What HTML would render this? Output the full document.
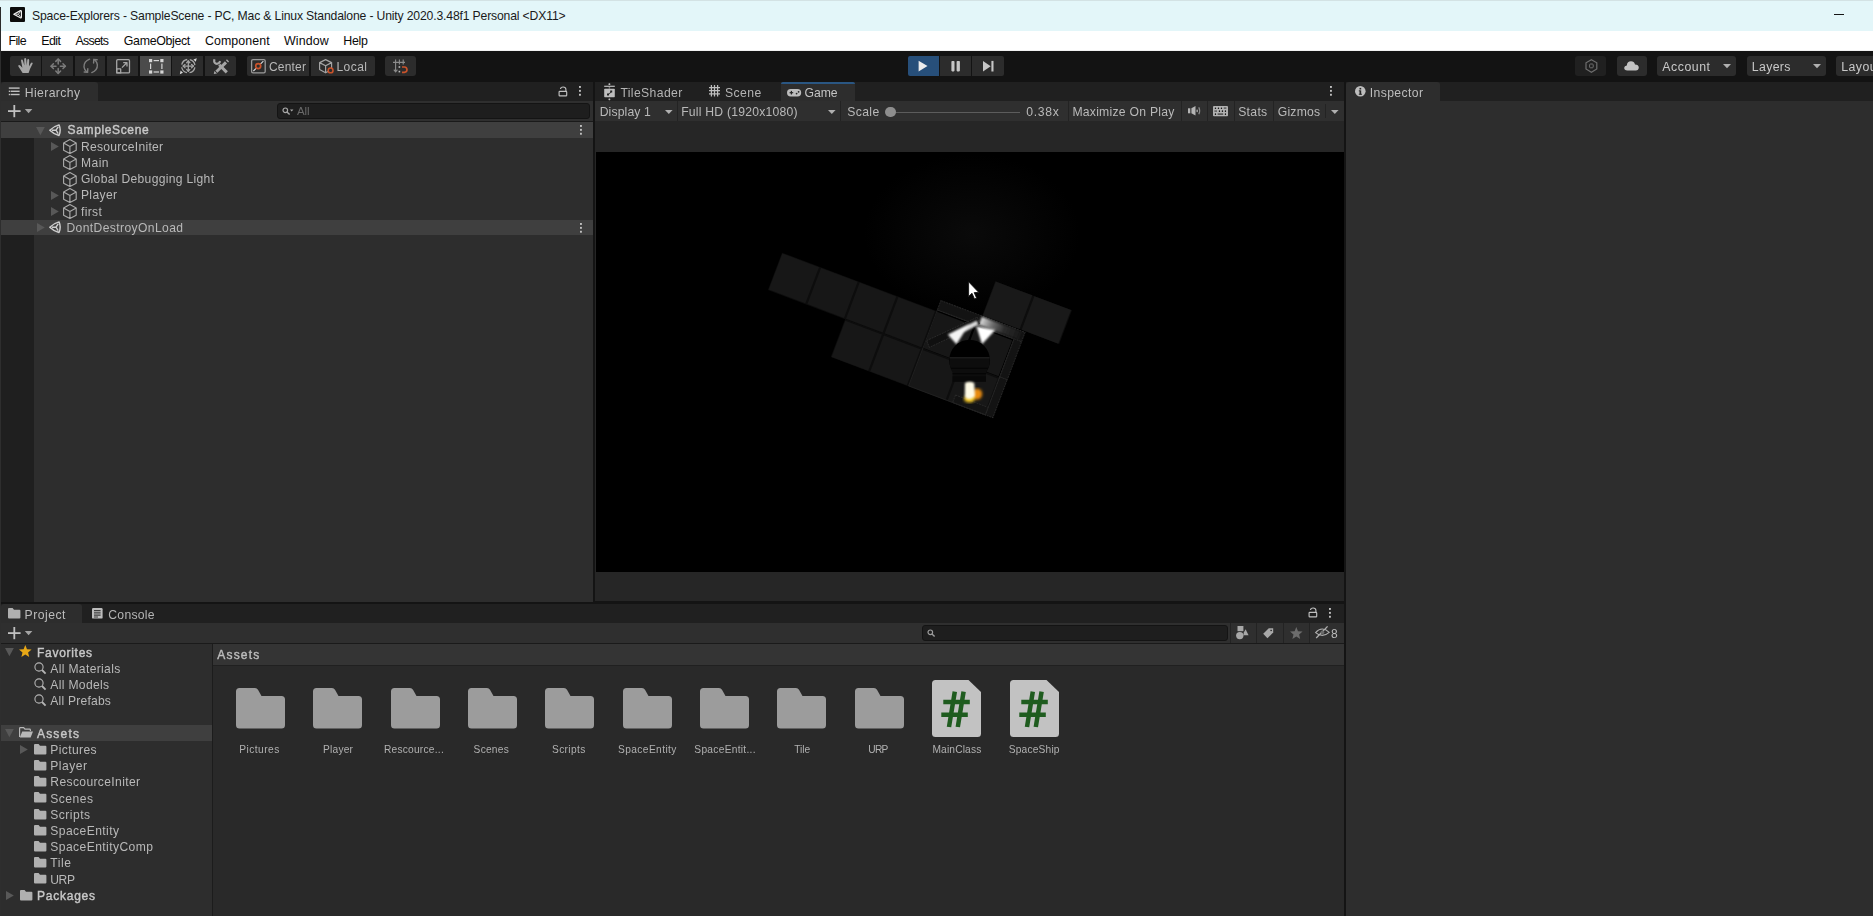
<!DOCTYPE html>
<html><head><meta charset="utf-8">
<style>
*{box-sizing:border-box;margin:0;padding:0}
html,body{width:1873px;height:916px;overflow:hidden;background:#141414}
body{font-family:"Liberation Sans",sans-serif;font-size:12px;color:#c4c4c4;position:relative}
.a{position:absolute}
.t{position:absolute;white-space:pre;line-height:16px;height:16px}
svg{position:absolute;overflow:visible}
</style></head><body>
<div class="a" style="left:0.0px;top:0.0px;width:1873.0px;height:30.8px;background:#e3f6f9;"></div>
<div class="a" style="left:0.0px;top:0.0px;width:1873.0px;height:1.0px;background:#d3e2e4;"></div>
<div class="a" style="left:0.0px;top:30.8px;width:1873.0px;height:20.2px;background:#ffffff;"></div>
<div class="a" style="left:0.0px;top:49.6px;width:1873.0px;height:1.2px;background:#f1f1f1;"></div>
<div class="a" style="left:0.0px;top:7.0px;width:1.1px;height:44.0px;background:#2a2a2a;"></div>
<div class="a" style="left:10.0px;top:7.0px;width:14.5px;height:14.5px;background:#0c0c0c;border-radius:1px"></div>
<svg style="left:10.0px;top:7.0px;" width="14.5" height="14.5" viewBox="0 0 14.5 14.5"><path d="M3.8 7.2 L10.4 3.6 Q11.4 3.4 11.4 4.4 L11.4 10 Q11.4 11 10.4 10.8 Z" fill="none" stroke="#f0f0f0" stroke-width="1.2" stroke-linejoin="round"/><path d="M5.6 7.2 L8.4 7.2 L10.4 4.6 M8.4 7.2 L10.4 9.8" stroke="#f0f0f0" stroke-width="0.9" fill="none"/></svg>
<div class="t" style="left:32.0px;top:7.5px;font-size:12.2px;font-weight:400;color:#1a1a1a;letter-spacing:-0.16px;">Space-Explorers - SampleScene - PC, Mac &amp; Linux Standalone - Unity 2020.3.48f1 Personal &lt;DX11&gt;</div>
<div class="a" style="left:1834.0px;top:14.0px;width:10.2px;height:1.3px;background:#151515;"></div>
<div class="t" style="left:8.5px;top:32.7px;font-size:12.4px;font-weight:400;color:#0a0a0a;letter-spacing:-0.62px;">File</div>
<div class="t" style="left:41.2px;top:32.7px;font-size:12.4px;font-weight:400;color:#0a0a0a;letter-spacing:-0.52px;">Edit</div>
<div class="t" style="left:75.4px;top:32.7px;font-size:12.4px;font-weight:400;color:#0a0a0a;letter-spacing:-0.72px;">Assets</div>
<div class="t" style="left:123.8px;top:32.7px;font-size:12.4px;font-weight:400;color:#0a0a0a;letter-spacing:-0.34px;">GameObject</div>
<div class="t" style="left:204.9px;top:32.7px;font-size:12.4px;font-weight:400;color:#0a0a0a;letter-spacing:0.10px;">Component</div>
<div class="t" style="left:284.0px;top:32.7px;font-size:12.4px;font-weight:400;color:#0a0a0a;letter-spacing:0.12px;">Window</div>
<div class="t" style="left:343.3px;top:32.7px;font-size:12.4px;font-weight:400;color:#0a0a0a;letter-spacing:-0.33px;">Help</div>
<div class="a" style="left:0.0px;top:51.0px;width:1873.0px;height:31.0px;background:#131313;"></div>
<div class="a" style="left:10.4px;top:56.0px;width:30.8px;height:20.3px;background:#2c2c2c;border-radius:2px 0 0 2px"></div>
<div class="a" style="left:42.0px;top:56.0px;width:30.8px;height:20.3px;background:#2c2c2c;border-radius:0"></div>
<div class="a" style="left:74.7px;top:56.0px;width:30.8px;height:20.3px;background:#2c2c2c;border-radius:0"></div>
<div class="a" style="left:107.2px;top:56.0px;width:30.8px;height:20.3px;background:#2c2c2c;border-radius:0"></div>
<div class="a" style="left:139.8px;top:56.0px;width:30.8px;height:20.3px;background:#4b4b4b;border-radius:0"></div>
<div class="a" style="left:172.1px;top:56.0px;width:30.8px;height:20.3px;background:#2c2c2c;border-radius:0"></div>
<div class="a" style="left:205.1px;top:56.0px;width:30.8px;height:20.3px;background:#2c2c2c;border-radius:0 2px 2px 0"></div>
<div class="a" style="left:246.5px;top:56.0px;width:62.6px;height:20.3px;background:#2c2c2c;border-radius:2px 0 0 2px"></div>
<div class="a" style="left:310.8px;top:56.0px;width:64.0px;height:20.3px;background:#2c2c2c;border-radius:0 2px 2px 0"></div>
<div class="a" style="left:384.5px;top:56.0px;width:31.2px;height:20.3px;background:#2c2c2c;border-radius:3px"></div>
<div class="a" style="left:908.2px;top:56.0px;width:30.5px;height:20.3px;background:#274f7a;border-radius:2px 0 0 2px"></div>
<div class="a" style="left:939.9px;top:56.0px;width:31.0px;height:20.3px;background:#2c2c2c;"></div>
<div class="a" style="left:972.0px;top:56.0px;width:31.5px;height:20.3px;background:#2c2c2c;border-radius:0 2px 2px 0"></div>
<svg style="left:908.0px;top:56.0px;" width="31" height="20" viewBox="0 0 31 20"><path d="M10.6 4.8 L19.5 10.1 L10.6 15.5 Z" fill="#ececec"/></svg>
<svg style="left:940.0px;top:56.0px;" width="31" height="20" viewBox="0 0 31 20"><rect x="11.4" y="5" width="3.1" height="10.4" rx="0.8" fill="#c6c6c6"/><rect x="16.6" y="5" width="3.3" height="10.4" rx="0.8" fill="#c6c6c6"/></svg>
<svg style="left:972.0px;top:56.0px;" width="31" height="20" viewBox="0 0 31 20"><path d="M11 4.9 L18.7 10.2 L11 15.5 Z" fill="#c6c6c6"/><rect x="19.4" y="4.9" width="2.1" height="10.6" fill="#c6c6c6"/></svg>
<div class="a" style="left:1575.4px;top:56.0px;width:31.0px;height:20.3px;background:#202020;border-radius:3px"></div>
<div class="a" style="left:1616.5px;top:56.0px;width:30.5px;height:20.3px;background:#2c2c2c;border-radius:3px"></div>
<div class="a" style="left:1656.9px;top:56.0px;width:79.4px;height:20.3px;background:#2c2c2c;border-radius:3px"></div>
<div class="a" style="left:1746.7px;top:56.0px;width:79.0px;height:20.3px;background:#2c2c2c;border-radius:3px"></div>
<div class="a" style="left:1836.2px;top:56.0px;width:50.0px;height:20.3px;background:#2c2c2c;border-radius:3px"></div>
<svg style="left:1723.4px;top:64.3px;" width="8" height="5" viewBox="0 0 8 5"><path d="M0 0 L8 0 L4 4.2 Z" fill="#b0b0b0"/></svg>
<svg style="left:1812.6px;top:64.3px;" width="8" height="5" viewBox="0 0 8 5"><path d="M0 0 L8 0 L4 4.2 Z" fill="#b0b0b0"/></svg>
<div class="a" style="left:1.0px;top:82.0px;width:592.2px;height:19.0px;background:#202020;"></div>
<div class="a" style="left:1.0px;top:82.0px;width:97.0px;height:19.0px;background:#2d2d2d;border-radius:3px 3px 0 0"></div>
<div class="a" style="left:1.0px;top:101.0px;width:592.2px;height:20.5px;background:#2f2f2f;"></div>
<div class="a" style="left:1.0px;top:121.0px;width:592.2px;height:1.0px;background:#1a1a1a;"></div>
<div class="a" style="left:1.0px;top:122.0px;width:592.2px;height:479.5px;background:#2d2d2d;"></div>
<div class="a" style="left:1.0px;top:137.5px;width:32.6px;height:464.0px;background:#1f1f1f;"></div>
<div class="a" style="left:1.0px;top:122.0px;width:592.2px;height:15.5px;background:#3f3f3f;"></div>
<div class="a" style="left:1.0px;top:220.2px;width:592.2px;height:14.8px;background:#3f3f3f;"></div>
<div class="a" style="left:277.0px;top:103.0px;width:312.6px;height:16.0px;background:#1e1e1e;border-radius:3px;border:1px solid #141414"></div>
<div class="a" style="left:595.0px;top:82.0px;width:748.8px;height:19.0px;background:#202020;"></div>
<div class="a" style="left:780.7px;top:81.6px;width:74.4px;height:19.4px;background:#2d2d2d;border-radius:3px 3px 0 0"></div>
<div class="a" style="left:780.7px;top:81.6px;width:74.4px;height:2.2px;background:#2a5682;border-radius:3px 3px 0 0"></div>
<div class="a" style="left:595.0px;top:101.0px;width:748.8px;height:20.3px;background:#2f2f2f;"></div>
<div class="a" style="left:595.0px;top:121.3px;width:748.8px;height:480.0px;background:#262626;"></div>
<div class="a" style="left:596.0px;top:151.6px;width:747.8px;height:420.2px;background:#000;"></div>
<div class="a" style="left:676.7px;top:101.0px;width:1.0px;height:20.3px;background:#232323;"></div>
<div class="a" style="left:839.5px;top:101.0px;width:1.0px;height:20.3px;background:#232323;"></div>
<div class="a" style="left:1067.5px;top:101.0px;width:1.0px;height:20.3px;background:#232323;"></div>
<div class="a" style="left:1180.5px;top:101.0px;width:1.0px;height:20.3px;background:#232323;"></div>
<div class="a" style="left:1206.8px;top:101.0px;width:1.0px;height:20.3px;background:#232323;"></div>
<div class="a" style="left:1233.5px;top:101.0px;width:1.0px;height:20.3px;background:#232323;"></div>
<div class="a" style="left:1273.2px;top:101.0px;width:1.0px;height:20.3px;background:#232323;"></div>
<div class="a" style="left:1325.2px;top:104.0px;width:1.0px;height:14.0px;background:#232323;"></div>
<svg style="left:665.0px;top:109.6px;" width="8" height="5" viewBox="0 0 8 5"><path d="M0 0 L7.6 0 L3.8 4 Z" fill="#b0b0b0"/></svg>
<svg style="left:827.5px;top:109.6px;" width="8" height="5" viewBox="0 0 8 5"><path d="M0 0 L7.6 0 L3.8 4 Z" fill="#b0b0b0"/></svg>
<svg style="left:1330.6px;top:109.6px;" width="8" height="5" viewBox="0 0 8 5"><path d="M0 0 L7.6 0 L3.8 4 Z" fill="#b0b0b0"/></svg>
<div class="a" style="left:891.0px;top:111.6px;width:129.0px;height:1.2px;background:#5c5c5c;"></div>
<div class="a" style="left:885.4px;top:106.7px;width:10.6px;height:10.6px;background:#8e8e8e;border-radius:50%"></div>
<div class="a" style="left:1346.3px;top:82.0px;width:527.0px;height:19.0px;background:#202020;"></div>
<div class="a" style="left:1346.3px;top:82.0px;width:93.4px;height:19.0px;background:#2d2d2d;border-radius:3px 3px 0 0"></div>
<div class="a" style="left:1346.3px;top:101.0px;width:527.0px;height:815.0px;background:#2d2d2d;"></div>
<div class="a" style="left:1.0px;top:603.5px;width:1343.0px;height:19.2px;background:#202020;"></div>
<div class="a" style="left:1.0px;top:603.5px;width:81.0px;height:19.2px;background:#2d2d2d;border-radius:3px 3px 0 0"></div>
<div class="a" style="left:1.0px;top:622.7px;width:1343.0px;height:20.3px;background:#2f2f2f;"></div>
<div class="a" style="left:1.0px;top:643.0px;width:1343.0px;height:1.0px;background:#1a1a1a;"></div>
<div class="a" style="left:1.0px;top:644.0px;width:211.0px;height:272.0px;background:#2d2d2d;"></div>
<div class="a" style="left:212.0px;top:644.0px;width:1.4px;height:272.0px;background:#1c1c1c;"></div>
<div class="a" style="left:213.4px;top:644.0px;width:1130.6px;height:20.6px;background:#343434;"></div>
<div class="a" style="left:213.4px;top:664.6px;width:1130.6px;height:1.0px;background:#202020;"></div>
<div class="a" style="left:213.4px;top:665.6px;width:1130.6px;height:251.0px;background:#292929;"></div>
<div class="a" style="left:1.0px;top:724.9px;width:211.0px;height:15.8px;background:#3f3f3f;"></div>
<div class="a" style="left:922.0px;top:624.5px;width:306.0px;height:16.5px;background:#1e1e1e;border-radius:3px;border:1px solid #141414"></div>
<div class="a" style="left:1230.1px;top:622.7px;width:1.0px;height:20.3px;background:#232323;"></div>
<div class="a" style="left:1256.0px;top:622.7px;width:1.0px;height:20.3px;background:#232323;"></div>
<div class="a" style="left:1282.5px;top:622.7px;width:1.0px;height:20.3px;background:#232323;"></div>
<div class="a" style="left:1309.0px;top:622.7px;width:1.0px;height:20.3px;background:#232323;"></div>
<svg style="left:236.0px;top:688.0px;" width="49" height="41" viewBox="0 0 49 41"><path d="M0 3.5 Q0 0 3.5 0 L19 0 Q21 0 22 1.8 L25.5 8 L45.5 8 Q49 8 49 11.5 L49 37 Q49 40.5 45.5 40.5 L3.5 40.5 Q0 40.5 0 37 Z" fill="#9c9c9c"/></svg>
<svg style="left:313.4px;top:688.0px;" width="49" height="41" viewBox="0 0 49 41"><path d="M0 3.5 Q0 0 3.5 0 L19 0 Q21 0 22 1.8 L25.5 8 L45.5 8 Q49 8 49 11.5 L49 37 Q49 40.5 45.5 40.5 L3.5 40.5 Q0 40.5 0 37 Z" fill="#9c9c9c"/></svg>
<svg style="left:390.7px;top:688.0px;" width="49" height="41" viewBox="0 0 49 41"><path d="M0 3.5 Q0 0 3.5 0 L19 0 Q21 0 22 1.8 L25.5 8 L45.5 8 Q49 8 49 11.5 L49 37 Q49 40.5 45.5 40.5 L3.5 40.5 Q0 40.5 0 37 Z" fill="#9c9c9c"/></svg>
<svg style="left:468.0px;top:688.0px;" width="49" height="41" viewBox="0 0 49 41"><path d="M0 3.5 Q0 0 3.5 0 L19 0 Q21 0 22 1.8 L25.5 8 L45.5 8 Q49 8 49 11.5 L49 37 Q49 40.5 45.5 40.5 L3.5 40.5 Q0 40.5 0 37 Z" fill="#9c9c9c"/></svg>
<svg style="left:545.4px;top:688.0px;" width="49" height="41" viewBox="0 0 49 41"><path d="M0 3.5 Q0 0 3.5 0 L19 0 Q21 0 22 1.8 L25.5 8 L45.5 8 Q49 8 49 11.5 L49 37 Q49 40.5 45.5 40.5 L3.5 40.5 Q0 40.5 0 37 Z" fill="#9c9c9c"/></svg>
<svg style="left:622.8px;top:688.0px;" width="49" height="41" viewBox="0 0 49 41"><path d="M0 3.5 Q0 0 3.5 0 L19 0 Q21 0 22 1.8 L25.5 8 L45.5 8 Q49 8 49 11.5 L49 37 Q49 40.5 45.5 40.5 L3.5 40.5 Q0 40.5 0 37 Z" fill="#9c9c9c"/></svg>
<svg style="left:700.1px;top:688.0px;" width="49" height="41" viewBox="0 0 49 41"><path d="M0 3.5 Q0 0 3.5 0 L19 0 Q21 0 22 1.8 L25.5 8 L45.5 8 Q49 8 49 11.5 L49 37 Q49 40.5 45.5 40.5 L3.5 40.5 Q0 40.5 0 37 Z" fill="#9c9c9c"/></svg>
<svg style="left:777.4px;top:688.0px;" width="49" height="41" viewBox="0 0 49 41"><path d="M0 3.5 Q0 0 3.5 0 L19 0 Q21 0 22 1.8 L25.5 8 L45.5 8 Q49 8 49 11.5 L49 37 Q49 40.5 45.5 40.5 L3.5 40.5 Q0 40.5 0 37 Z" fill="#9c9c9c"/></svg>
<svg style="left:854.8px;top:688.0px;" width="49" height="41" viewBox="0 0 49 41"><path d="M0 3.5 Q0 0 3.5 0 L19 0 Q21 0 22 1.8 L25.5 8 L45.5 8 Q49 8 49 11.5 L49 37 Q49 40.5 45.5 40.5 L3.5 40.5 Q0 40.5 0 37 Z" fill="#9c9c9c"/></svg>
<svg style="left:932.3px;top:680.0px;" width="49" height="57" viewBox="0 0 49 57"><path d="M3.5 0 L36.5 0 L49 12 L49 53.5 Q49 57 45.5 57 L3.5 57 Q0 57 0 53.5 L0 3.5 Q0 0 3.5 0 Z" fill="#c2c2c2"/><g stroke="#1f5c1f" stroke-width="4.5" fill="none"><path d="M22.8 11.6 L17 47 M31.6 11.6 L25.8 47 M11.3 22 L37.8 22 M9.3 34.7 L35.8 34.7"/></g></svg>
<svg style="left:1009.5px;top:680.0px;" width="49" height="57" viewBox="0 0 49 57"><path d="M3.5 0 L36.5 0 L49 12 L49 53.5 Q49 57 45.5 57 L3.5 57 Q0 57 0 53.5 L0 3.5 Q0 0 3.5 0 Z" fill="#c2c2c2"/><g stroke="#1f5c1f" stroke-width="4.5" fill="none"><path d="M22.8 11.6 L17 47 M31.6 11.6 L25.8 47 M11.3 22 L37.8 22 M9.3 34.7 L35.8 34.7"/></g></svg>
<div class="a" style="left:0.0px;top:51.0px;width:1.0px;height:865.0px;background:#2e2e2e;"></div>
<svg style="left:8.0px;top:86.0px;" width="13" height="11" viewBox="0 0 13 11"><g fill="#c0c0c0"><rect x="0.8" y="1.4" width="10.8" height="1.4"/><rect x="2.6" y="4.6" width="9" height="1.4"/><rect x="2.6" y="7.8" width="9" height="1.4"/><rect x="0.8" y="4.6" width="1.2" height="1.4"/><rect x="0.8" y="7.8" width="1.2" height="1.4"/></g></svg>
<svg style="left:8.0px;top:105.0px;" width="26" height="14" viewBox="0 0 26 14"><g fill="#c0c0c0"><rect x="0" y="5.2" width="12.6" height="1.8"/><rect x="5.4" y="0" width="1.8" height="12.2"/></g><path d="M16.8 4 L24.4 4 L20.6 8.2 Z" fill="#a4a4a4"/></svg>
<svg style="left:8.0px;top:626.8px;" width="26" height="14" viewBox="0 0 26 14"><g fill="#c0c0c0"><rect x="0" y="5.2" width="12.6" height="1.8"/><rect x="5.4" y="0" width="1.8" height="12.2"/></g><path d="M16.8 4 L24.4 4 L20.6 8.2 Z" fill="#a4a4a4"/></svg>
<svg style="left:558.0px;top:86.0px;" width="10" height="11" viewBox="0 0 10 11"><rect x="1.1" y="5.3" width="7.6" height="4.6" rx="0.7" fill="none" stroke="#c0c0c0" stroke-width="1.15"/><path d="M7.9 5.2 L7.9 3.2 Q7.7 1 5.2 1 Q2.6 1 2.5 3" fill="none" stroke="#c0c0c0" stroke-width="1.15"/></svg>
<svg style="left:579.2px;top:86.3px;" width="3" height="12" viewBox="0 0 3 12"><g fill="#c0c0c0"><rect x="0" y="0" width="1.9" height="1.9"/><rect x="0" y="3.9" width="1.9" height="1.9"/><rect x="0" y="7.8" width="1.9" height="1.9"/></g></svg>
<svg style="left:580.3px;top:125.0px;" width="3" height="12" viewBox="0 0 3 12"><g fill="#c0c0c0"><rect x="0" y="0" width="1.9" height="1.9"/><rect x="0" y="3.9" width="1.9" height="1.9"/><rect x="0" y="7.8" width="1.9" height="1.9"/></g></svg>
<svg style="left:580.3px;top:223.2px;" width="3" height="12" viewBox="0 0 3 12"><g fill="#c0c0c0"><rect x="0" y="0" width="1.9" height="1.9"/><rect x="0" y="3.9" width="1.9" height="1.9"/><rect x="0" y="7.8" width="1.9" height="1.9"/></g></svg>
<svg style="left:1329.6px;top:86.3px;" width="3" height="12" viewBox="0 0 3 12"><g fill="#c0c0c0"><rect x="0" y="0" width="1.9" height="1.9"/><rect x="0" y="3.9" width="1.9" height="1.9"/><rect x="0" y="7.8" width="1.9" height="1.9"/></g></svg>
<svg style="left:1308.4px;top:607.4px;" width="10" height="11" viewBox="0 0 10 11"><rect x="1.1" y="5.3" width="7.6" height="4.6" rx="0.7" fill="none" stroke="#c0c0c0" stroke-width="1.15"/><path d="M7.9 5.2 L7.9 3.2 Q7.7 1 5.2 1 Q2.6 1 2.5 3" fill="none" stroke="#c0c0c0" stroke-width="1.15"/></svg>
<svg style="left:1329.4px;top:608.0px;" width="3" height="12" viewBox="0 0 3 12"><g fill="#c0c0c0"><rect x="0" y="0" width="1.9" height="1.9"/><rect x="0" y="3.9" width="1.9" height="1.9"/><rect x="0" y="7.8" width="1.9" height="1.9"/></g></svg>
<svg style="left:282.2px;top:106.6px;" width="12" height="9" viewBox="0 0 12 9"><circle cx="3.3" cy="3.3" r="2.3" fill="none" stroke="#a8a8a8" stroke-width="1.2"/><path d="M5 5 L7.6 7.6" stroke="#a8a8a8" stroke-width="1.4"/><path d="M8 2.6 L11.4 2.6 L9.7 4.6 Z" fill="#a8a8a8"/></svg>
<svg style="left:927.2px;top:629.4px;" width="12" height="9" viewBox="0 0 12 9"><circle cx="3.3" cy="3.3" r="2.3" fill="none" stroke="#9c9c9c" stroke-width="1.2"/><path d="M5 5 L7.6 7.6" stroke="#9c9c9c" stroke-width="1.4"/></svg>
<svg style="left:35.8px;top:127.0px;" width="9" height="9" viewBox="0 0 9 9"><path d="M0 0 L8.8 0 L4.4 8.2 Z" fill="#585858"/></svg>
<svg style="left:49.0px;top:123.6px;" width="12" height="12.4" viewBox="0 0 12 12.4"><path d="M0.8 6.2 Q4.6 2.4 10 0.9 Q12.4 6.2 10 11.5 Q4.6 10 0.8 6.2 Z" fill="none" stroke="#cdcdcd" stroke-width="1.5" stroke-linejoin="round"/><path d="M3 6.2 L7 6.2 M7 6.2 L9.2 2.8 M7 6.2 L9.2 9.6" stroke="#cdcdcd" stroke-width="1.4" fill="none"/></svg>
<svg style="left:36.6px;top:223.4px;" width="9" height="10" viewBox="0 0 9 10"><path d="M0 0 L7.8 4.5 L0 9 Z" fill="#585858"/></svg>
<svg style="left:49.0px;top:221.4px;" width="12" height="12.4" viewBox="0 0 12 12.4"><path d="M0.8 6.2 Q4.6 2.4 10 0.9 Q12.4 6.2 10 11.5 Q4.6 10 0.8 6.2 Z" fill="none" stroke="#cdcdcd" stroke-width="1.5" stroke-linejoin="round"/><path d="M3 6.2 L7 6.2 M7 6.2 L9.2 2.8 M7 6.2 L9.2 9.6" stroke="#cdcdcd" stroke-width="1.4" fill="none"/></svg>
<svg style="left:62.8px;top:139.1px;" width="14" height="15" viewBox="0 0 14 15"><path d="M6.9 0.6 L13.2 3.9 L13.2 11.2 L6.9 14.6 L0.6 11.2 L0.6 3.9 Z M0.6 3.9 L6.9 7.4 L13.2 3.9 M6.9 7.4 L6.9 14.6" fill="none" stroke="#a9a9a9" stroke-width="1.15" stroke-linejoin="round"/></svg>
<svg style="left:51.0px;top:142.2px;" width="9" height="10" viewBox="0 0 9 10"><path d="M0 0 L7.8 4.5 L0 9 Z" fill="#585858"/></svg>
<svg style="left:62.8px;top:155.3px;" width="14" height="15" viewBox="0 0 14 15"><path d="M6.9 0.6 L13.2 3.9 L13.2 11.2 L6.9 14.6 L0.6 11.2 L0.6 3.9 Z M0.6 3.9 L6.9 7.4 L13.2 3.9 M6.9 7.4 L6.9 14.6" fill="none" stroke="#a9a9a9" stroke-width="1.15" stroke-linejoin="round"/></svg>
<svg style="left:62.8px;top:171.5px;" width="14" height="15" viewBox="0 0 14 15"><path d="M6.9 0.6 L13.2 3.9 L13.2 11.2 L6.9 14.6 L0.6 11.2 L0.6 3.9 Z M0.6 3.9 L6.9 7.4 L13.2 3.9 M6.9 7.4 L6.9 14.6" fill="none" stroke="#a9a9a9" stroke-width="1.15" stroke-linejoin="round"/></svg>
<svg style="left:62.8px;top:187.8px;" width="14" height="15" viewBox="0 0 14 15"><path d="M6.9 0.6 L13.2 3.9 L13.2 11.2 L6.9 14.6 L0.6 11.2 L0.6 3.9 Z M0.6 3.9 L6.9 7.4 L13.2 3.9 M6.9 7.4 L6.9 14.6" fill="none" stroke="#a9a9a9" stroke-width="1.15" stroke-linejoin="round"/></svg>
<svg style="left:51.0px;top:190.9px;" width="9" height="10" viewBox="0 0 9 10"><path d="M0 0 L7.8 4.5 L0 9 Z" fill="#585858"/></svg>
<svg style="left:62.8px;top:204.1px;" width="14" height="15" viewBox="0 0 14 15"><path d="M6.9 0.6 L13.2 3.9 L13.2 11.2 L6.9 14.6 L0.6 11.2 L0.6 3.9 Z M0.6 3.9 L6.9 7.4 L13.2 3.9 M6.9 7.4 L6.9 14.6" fill="none" stroke="#a9a9a9" stroke-width="1.15" stroke-linejoin="round"/></svg>
<svg style="left:51.0px;top:207.2px;" width="9" height="10" viewBox="0 0 9 10"><path d="M0 0 L7.8 4.5 L0 9 Z" fill="#585858"/></svg>
<svg style="left:5.4px;top:648.0px;" width="9" height="9" viewBox="0 0 9 9"><path d="M0 0 L8.8 0 L4.4 8.2 Z" fill="#585858"/></svg>
<svg style="left:5.4px;top:728.8px;" width="9" height="9" viewBox="0 0 9 9"><path d="M0 0 L8.8 0 L4.4 8.2 Z" fill="#585858"/></svg>
<svg style="left:6.2px;top:890.5px;" width="9" height="10" viewBox="0 0 9 10"><path d="M0 0 L7.8 4.5 L0 9 Z" fill="#585858"/></svg>
<svg style="left:20.2px;top:744.7px;" width="9" height="10" viewBox="0 0 9 10"><path d="M0 0 L7.8 4.5 L0 9 Z" fill="#585858"/></svg>
<svg style="left:19.2px;top:645.4px;" width="13" height="12" viewBox="0 0 13 12"><path d="M6.3 0 L8 4.2 L12.6 4.6 L9.1 7.6 L10.2 12 L6.3 9.6 L2.4 12 L3.5 7.6 L0 4.6 L4.6 4.2 Z" fill="#e8a817"/></svg>
<svg style="left:33.6px;top:661.8px;" width="13" height="13" viewBox="0 0 13 13"><circle cx="5" cy="5" r="4.1" fill="none" stroke="#b4b4b4" stroke-width="1.1"/><path d="M8 8 L11.6 11.6" stroke="#b4b4b4" stroke-width="1.8"/></svg>
<svg style="left:33.6px;top:678.0px;" width="13" height="13" viewBox="0 0 13 13"><circle cx="5" cy="5" r="4.1" fill="none" stroke="#b4b4b4" stroke-width="1.1"/><path d="M8 8 L11.6 11.6" stroke="#b4b4b4" stroke-width="1.8"/></svg>
<svg style="left:33.6px;top:694.2px;" width="13" height="13" viewBox="0 0 13 13"><circle cx="5" cy="5" r="4.1" fill="none" stroke="#b4b4b4" stroke-width="1.1"/><path d="M8 8 L11.6 11.6" stroke="#b4b4b4" stroke-width="1.8"/></svg>
<svg style="left:33.5px;top:743.8px;" width="13" height="11" viewBox="0 0 13 11"><path d="M0 1 Q0 0 1 0 L4.6 0 L6 1.8 L11.4 1.8 Q12.4 1.8 12.4 2.8 L12.4 9.4 Q12.4 10.4 11.4 10.4 L1 10.4 Q0 10.4 0 9.4 Z" fill="#b0b0b0"/></svg>
<svg style="left:33.5px;top:760.0px;" width="13" height="11" viewBox="0 0 13 11"><path d="M0 1 Q0 0 1 0 L4.6 0 L6 1.8 L11.4 1.8 Q12.4 1.8 12.4 2.8 L12.4 9.4 Q12.4 10.4 11.4 10.4 L1 10.4 Q0 10.4 0 9.4 Z" fill="#b0b0b0"/></svg>
<svg style="left:33.5px;top:776.2px;" width="13" height="11" viewBox="0 0 13 11"><path d="M0 1 Q0 0 1 0 L4.6 0 L6 1.8 L11.4 1.8 Q12.4 1.8 12.4 2.8 L12.4 9.4 Q12.4 10.4 11.4 10.4 L1 10.4 Q0 10.4 0 9.4 Z" fill="#b0b0b0"/></svg>
<svg style="left:33.5px;top:792.4px;" width="13" height="11" viewBox="0 0 13 11"><path d="M0 1 Q0 0 1 0 L4.6 0 L6 1.8 L11.4 1.8 Q12.4 1.8 12.4 2.8 L12.4 9.4 Q12.4 10.4 11.4 10.4 L1 10.4 Q0 10.4 0 9.4 Z" fill="#b0b0b0"/></svg>
<svg style="left:33.5px;top:808.6px;" width="13" height="11" viewBox="0 0 13 11"><path d="M0 1 Q0 0 1 0 L4.6 0 L6 1.8 L11.4 1.8 Q12.4 1.8 12.4 2.8 L12.4 9.4 Q12.4 10.4 11.4 10.4 L1 10.4 Q0 10.4 0 9.4 Z" fill="#b0b0b0"/></svg>
<svg style="left:33.5px;top:824.8px;" width="13" height="11" viewBox="0 0 13 11"><path d="M0 1 Q0 0 1 0 L4.6 0 L6 1.8 L11.4 1.8 Q12.4 1.8 12.4 2.8 L12.4 9.4 Q12.4 10.4 11.4 10.4 L1 10.4 Q0 10.4 0 9.4 Z" fill="#b0b0b0"/></svg>
<svg style="left:33.5px;top:841.0px;" width="13" height="11" viewBox="0 0 13 11"><path d="M0 1 Q0 0 1 0 L4.6 0 L6 1.8 L11.4 1.8 Q12.4 1.8 12.4 2.8 L12.4 9.4 Q12.4 10.4 11.4 10.4 L1 10.4 Q0 10.4 0 9.4 Z" fill="#b0b0b0"/></svg>
<svg style="left:33.5px;top:857.2px;" width="13" height="11" viewBox="0 0 13 11"><path d="M0 1 Q0 0 1 0 L4.6 0 L6 1.8 L11.4 1.8 Q12.4 1.8 12.4 2.8 L12.4 9.4 Q12.4 10.4 11.4 10.4 L1 10.4 Q0 10.4 0 9.4 Z" fill="#b0b0b0"/></svg>
<svg style="left:33.5px;top:873.4px;" width="13" height="11" viewBox="0 0 13 11"><path d="M0 1 Q0 0 1 0 L4.6 0 L6 1.8 L11.4 1.8 Q12.4 1.8 12.4 2.8 L12.4 9.4 Q12.4 10.4 11.4 10.4 L1 10.4 Q0 10.4 0 9.4 Z" fill="#b0b0b0"/></svg>
<svg style="left:20.0px;top:889.6px;" width="13" height="11" viewBox="0 0 13 11"><path d="M0 1 Q0 0 1 0 L4.6 0 L6 1.8 L11.4 1.8 Q12.4 1.8 12.4 2.8 L12.4 9.4 Q12.4 10.4 11.4 10.4 L1 10.4 Q0 10.4 0 9.4 Z" fill="#b0b0b0"/></svg>
<svg style="left:7.9px;top:608.4px;" width="13" height="11" viewBox="0 0 13 11"><path d="M0 1 Q0 0 1 0 L4.6 0 L6 1.8 L11.4 1.8 Q12.4 1.8 12.4 2.8 L12.4 9.4 Q12.4 10.4 11.4 10.4 L1 10.4 Q0 10.4 0 9.4 Z" fill="#b0b0b0"/></svg>
<svg style="left:19.0px;top:727.2px;" width="15" height="11" viewBox="0 0 15 11"><path d="M0.6 10 L0.6 1.4 Q0.6 0.6 1.4 0.6 L4.6 0.6 L6 2.2 L10.6 2.2 Q11.4 2.2 11.4 3 L11.4 4" fill="none" stroke="#b8b8b8" stroke-width="1.2"/><path d="M0.8 10.4 L3.2 4.4 L14 4.4 L11.6 10.4 Z" fill="#b8b8b8"/></svg>
<svg style="left:92.3px;top:607.8px;" width="11" height="11" viewBox="0 0 11 11"><rect x="0" y="0" width="10.6" height="10.6" rx="1.2" fill="#bdbdbd"/><g fill="#202020"><rect x="2" y="2.2" width="6.6" height="1"/><rect x="2" y="4.4" width="6.6" height="1"/><rect x="2" y="6.6" width="6.6" height="1"/><rect x="2" y="8.6" width="4" height="0.8"/></g></svg>
<svg style="left:18.0px;top:58.0px;" width="15" height="15.4" viewBox="0 0 15 15.4"><path d="M4.6 15 L10.6 15 L12 11 L14.6 5.8 Q15 4.6 14 4.4 Q13.2 4.4 12.6 5.6 L11 8.6 L11.2 2.2 Q11.2 1 10.2 1 Q9.3 1 9.2 2.2 L8.8 7.4 L8.2 1.2 Q8.1 0.1 7.1 0.1 Q6.1 0.2 6.2 1.4 L6.4 7.6 L4.9 2.4 Q4.6 1.3 3.7 1.5 Q2.8 1.8 3.1 3 L4.4 9.8 L2.2 7.4 Q1.2 6.5 0.5 7.2 Q-0.1 7.9 0.6 8.8 Z" fill="#a6a6a6"/></svg>
<svg style="left:49.8px;top:58.0px;" width="16.4" height="16.2" viewBox="0 0 16.4 16.2"><g stroke="#7c7c7c" stroke-width="1.5" fill="none" stroke-linecap="round" stroke-linejoin="round"><path d="M8.2 1.2 L8.2 6 M8.2 10.4 L8.2 15.2 M1.2 8.2 L6 8.2 M10.4 8.2 L15.2 8.2"/><path d="M5.8 3.4 L8.2 1 L10.6 3.4 M5.8 13 L8.2 15.4 L10.6 13 M3.4 5.8 L1 8.2 L3.4 10.6 M13 5.8 L15.4 8.2 L13 10.6"/></g></svg>
<svg style="left:83.0px;top:58.4px;" width="15.4" height="15.8" viewBox="0 0 15.4 15.8"><g stroke="#7c7c7c" stroke-width="1.4" fill="none" stroke-linecap="round"><path d="M6.6 1.2 Q0.8 3.4 1 9 Q1.4 12 3.6 13.8"/><path d="M8.8 14.6 Q14.6 12.4 14.4 6.8 Q14 3.8 11.8 2"/><path d="M1.2 14 L4.6 14.2 L4.8 10.8"/><path d="M14.2 1.8 L10.8 1.6 L10.6 5"/></g></svg>
<svg style="left:116.0px;top:59.0px;" width="14.2" height="14.8" viewBox="0 0 14.2 14.8"><g stroke="#a6a6a6" stroke-width="1.3" fill="none" stroke-linejoin="round"><rect x="0.7" y="0.7" width="12.8" height="13.2" rx="1"/><rect x="0.7" y="9.8" width="4" height="4.1"/><path d="M6 8.6 L10.8 3.8 M7.2 3.6 L11 3.6 L11 7.4"/></g></svg>
<svg style="left:148.6px;top:59.0px;" width="14.6" height="14.8" viewBox="0 0 14.6 14.8"><g fill="#d6d6d6"><rect x="0" y="0" width="3.2" height="3.2"/><rect x="11.3" y="0" width="3.2" height="3.2"/><rect x="0" y="11.4" width="3.2" height="3.2"/><rect x="11.3" y="11.4" width="3.2" height="3.2"/><rect x="4.6" y="1" width="5.4" height="1.2"/><rect x="4.6" y="12.4" width="5.4" height="1.2"/><rect x="1" y="4.6" width="1.2" height="5.4"/><rect x="12.3" y="4.6" width="1.2" height="5.4"/></g></svg>
<svg style="left:180.0px;top:57.8px;" width="17" height="16.8" viewBox="0 0 17 16.8"><g stroke="#a6a6a6" fill="none" stroke-width="1.3"><circle cx="8.3" cy="8.1" r="6.7" stroke-dasharray="7.9 2.62" stroke-dashoffset="-1.3"/></g><g stroke="#a6a6a6" stroke-width="1.3" fill="none" stroke-linecap="round" stroke-linejoin="round"><path d="M8.3 3 L8.3 13.2 M3.2 8.1 L13.4 8.1"/><path d="M6.7 4.8 L8.3 3 L9.9 4.8 M6.7 11.4 L8.3 13.2 L9.9 11.4 M5 6.5 L3.2 8.1 L5 9.7 M11.6 6.5 L13.4 8.1 L11.6 9.7"/></g><path d="M13.4 1.6 L16.8 0.2 L15.8 3.8 Z M3 14.8 L-0.2 16.2 L0.6 12.6 Z" fill="#d6d6d6"/></svg>
<svg style="left:213.4px;top:58.0px;" width="15.8" height="16.6" viewBox="0 0 15.8 16.6"><g stroke="#a6a6a6" fill="none" stroke-linecap="butt"><path d="M13 4.4 L3.4 13.8" stroke-width="3"/><path d="M14 3.4 L15 2.4" stroke-width="3"/><path d="M6.2 6.8 L13.8 14.4" stroke-width="3"/><path d="M1.4 1.2 Q0.4 4.4 3.2 5.8 Q6 6.2 7.2 3.2" stroke-width="2.1"/></g><path d="M0.8 16 L1.4 13 L4 15.4 Z" fill="#a6a6a6"/></svg>
<svg style="left:251.2px;top:58.9px;" width="14.8" height="14.4" viewBox="0 0 14.8 14.4"><rect x="0.6" y="0.6" width="13.6" height="13.2" rx="1.4" fill="none" stroke="#9a9a9a" stroke-width="1.3"/><path d="M2.4 12 L12.4 2.2" stroke="#dcdcdc" stroke-width="1.1"/><circle cx="7.2" cy="7.1" r="2.5" fill="#2c2c2c" stroke="#c9532b" stroke-width="1.7"/></svg>
<svg style="left:319.4px;top:58.8px;" width="15" height="14.6" viewBox="0 0 15 14.6"><path d="M6.6 0.6 L12.6 3.6 L12.6 10.6 L6.6 13.8 L0.6 10.6 L0.6 3.6 Z M0.6 3.6 L6.6 6.8 L12.6 3.6 M6.6 6.8 L6.6 13.8" fill="none" stroke="#a4a4a4" stroke-width="1.2" stroke-linejoin="round"/><circle cx="11.6" cy="11.4" r="2.4" fill="#2c2c2c" stroke="#c9532b" stroke-width="1.6"/></svg>
<svg style="left:393.0px;top:59.0px;" width="14.6" height="14.6" viewBox="0 0 14.6 14.6"><g stroke="#8c8c8c" stroke-width="1.1" fill="none"><path d="M0 3.4 L12 3.4 M2.6 0.4 L2.6 12.4 M6.4 0.4 L6.4 5.4 M10.2 0.4 L10.2 5.4"/><path d="M0.8 10.6 L2.6 12.8 L4.4 10.6"/></g><g fill="#bdbdbd"><rect x="5.6" y="7.2" width="1.6" height="1.6"/><rect x="5.6" y="11.8" width="1.6" height="1.6"/></g><path d="M9 8 L11.4 8 Q14 8.2 14 10.8 Q13.8 13.2 11.4 13.4 L9 13.4" fill="none" stroke="#c9532b" stroke-width="1.7"/></svg>
<svg style="left:1584.6px;top:59.4px;" width="13" height="14" viewBox="0 0 13 14"><path d="M6.4 0.7 L11.8 3.8 L11.8 10 L6.4 13.2 L1 10 L1 3.8 Z" fill="none" stroke="#6e6e6e" stroke-width="1.2"/><rect x="4.6" y="5" width="3.6" height="3.8" rx="0.8" fill="none" stroke="#6e6e6e" stroke-width="1"/></svg>
<svg style="left:1623.8px;top:60.6px;" width="15" height="10" viewBox="0 0 15 10"><path d="M3.4 9.6 Q0.2 9.4 0.2 6.8 Q0.4 4.6 2.8 4.4 Q3.2 0.4 7 0.3 Q10.2 0.4 11 3.4 Q14.6 3.4 14.8 6.6 Q14.6 9.4 11.8 9.6 Z" fill="#c4c4c4"/></svg>
<svg style="left:604.3px;top:83.0px;" width="11" height="17.4" viewBox="0 0 11 17.4"><g fill="#bdbdbd"><rect x="0.2" y="5.7" width="10.6" height="8.5" rx="0.6"/><rect x="0.2" y="2.7" width="10.6" height="1.2"/><rect x="4.5" y="0.3" width="1.8" height="1.8" rx="0.6"/><rect x="4.7" y="3.9" width="1.4" height="1.8" opacity="0.5"/><rect x="4.5" y="15.4" width="1.8" height="1.8" rx="0.6"/></g><g fill="#222"><rect x="6.2" y="7.5" width="2" height="2"/><rect x="3" y="10.5" width="2" height="2"/><path d="M4.4 11.1 L6.9 8.7 L7.4 9.2 L4.9 11.6Z"/></g></svg>
<svg style="left:708.8px;top:85.3px;" width="11" height="11.6" viewBox="0 0 11 11.6"><g stroke="#bdbdbd" stroke-width="1.25" fill="none"><path d="M2.4 0 L2.4 11.4 M5.5 0 L5.5 11.4 M8.6 0 L8.6 11.4 M0 2.6 L11 2.6 M0 5.7 L11 5.7 M0 8.8 L11 8.8"/></g></svg>
<svg style="left:786.8px;top:88.6px;" width="14.2" height="7.6" viewBox="0 0 14.2 7.6"><rect x="0" y="0" width="14.2" height="7.4" rx="3.7" fill="#bdbdbd"/><g fill="#262626"><rect x="2.6" y="3.1" width="3.6" height="1.2"/><rect x="3.8" y="1.9" width="1.2" height="3.6"/><circle cx="9.6" cy="4.6" r="0.9"/><circle cx="11.6" cy="2.8" r="0.9"/></g></svg>
<svg style="left:1354.6px;top:86.3px;" width="10.6" height="10.6" viewBox="0 0 10.6 10.6"><circle cx="5.3" cy="5.3" r="5.3" fill="#bdbdbd"/><g fill="#262626"><rect x="4.5" y="4.4" width="1.7" height="4.2"/><rect x="4.5" y="1.9" width="1.7" height="1.6"/><rect x="3.8" y="4.4" width="1.4" height="0.9"/><rect x="3.8" y="7.8" width="3.2" height="0.9"/></g></svg>
<svg style="left:1187.6px;top:105.8px;" width="13" height="9.6" viewBox="0 0 13 9.6"><g fill="#b4b4b4"><rect x="0" y="2.3" width="2.3" height="5"/><path d="M3.4 2.3 L7.5 0 L7.5 9.4 L3.4 7.2 Z"/><rect x="8.5" y="3.4" width="1.3" height="2.8" rx="0.6"/></g><path d="M10.8 1.2 Q12.6 4.8 10.8 8.2" fill="none" stroke="#8c8c8c" stroke-width="1.2"/></svg>
<svg style="left:1213.0px;top:105.9px;" width="15" height="10.2" viewBox="0 0 15 10.2"><rect x="0" y="0" width="15" height="10.2" rx="1" fill="#b2b2b2"/><g fill="#1a1a1a"><rect x="1.8" y="1.4" width="1.3" height="1.6" rx="0.5"/><rect x="4.8" y="1.4" width="1.3" height="1.6" rx="0.5"/><rect x="7.8" y="1.4" width="1.3" height="1.6" rx="0.5"/><rect x="10.8" y="1.4" width="2.6" height="1.4" fill="#555"/><rect x="1.4" y="4.4" width="2.6" height="1.4" fill="#555"/><rect x="5.8" y="4.3" width="1.3" height="1.6" rx="0.5"/><rect x="8.8" y="4.3" width="1.3" height="1.6" rx="0.5"/><rect x="11.8" y="4.3" width="1.3" height="1.6" rx="0.5"/><rect x="1.8" y="7.3" width="1.3" height="1.6" rx="0.5"/><rect x="4.6" y="7.4" width="5.6" height="1.4" fill="#444"/><rect x="11.8" y="7.3" width="1.3" height="1.6" rx="0.5"/></g></svg>
<svg style="left:1236.4px;top:625.8px;" width="13" height="13.4" viewBox="0 0 13 13.4"><g fill="#a8a8a8"><rect x="1.5" y="0" width="5.9" height="5.2"/><circle cx="3.8" cy="9.6" r="3.7"/><path d="M9.6 3.2 L12.6 9.2 L7.4 9.2 L7.8 6.6 Z"/></g></svg>
<svg style="left:1263.0px;top:627.8px;" width="10.6" height="10.4" viewBox="0 0 10.6 10.4"><path d="M0.2 5.8 L5.8 0.3 L10.2 0.3 L10.2 4.6 L4.4 10.2 Z" fill="#a8a8a8"/><rect x="7.4" y="1.8" width="1.5" height="1.3" fill="#2a2a2a"/></svg>
<svg style="left:1289.6px;top:627.0px;" width="12.6" height="12" viewBox="0 0 12.6 12"><path d="M6.3 0 L8 4.2 L12.6 4.6 L9.1 7.6 L10.2 12 L6.3 9.6 L2.4 12 L3.5 7.6 L0 4.6 L4.6 4.2 Z" fill="#6c6c6c"/></svg>
<svg style="left:1314.6px;top:626.4px;" width="15" height="12.4" viewBox="0 0 15 12.4"><g fill="none" stroke="#b0b0b0" stroke-width="1.1"><path d="M0.6 6.6 Q7 -0.4 14.2 6.4 Q7.4 12.4 0.6 6.6 Z"/><path d="M1.2 12 L12.6 0.4" stroke-width="1.3"/></g><circle cx="7.4" cy="6.3" r="1.9" fill="#6a6a6a"/></svg>
<svg style="left:0.0px;top:0.0px;" width="1873" height="916" viewBox="0 0 1873 916"><defs><radialGradient id="gl" cx="50%" cy="50%" r="50%"><stop offset="0" stop-color="#0a0a0a"/><stop offset="1" stop-color="#000"/></radialGradient><linearGradient id="bar" x1="0" y1="0" x2="1" y2="0"><stop offset="0" stop-color="#dcdcdc"/><stop offset="0.3" stop-color="#6e6e6e"/><stop offset="0.6" stop-color="#2c2c2c"/><stop offset="1" stop-color="#181818"/></linearGradient><filter id="bl"><feGaussianBlur stdDeviation="0.8"/></filter><filter id="bl2"><feGaussianBlur stdDeviation="1.5"/></filter></defs><ellipse cx="972" cy="234" rx="108" ry="80" fill="url(#gl)"/><g transform="translate(781.8 252) rotate(20.7)"><g fill="#0d0d0d"><rect x="0.5" y="0.5" width="165" height="40"/><rect x="83" y="40" width="166" height="41"/><rect x="210" y="-48" width="82" height="36"/></g><rect x="1.1" y="1.1" width="39.1" height="38.6" fill="#171717"/><rect x="42.4" y="1.1" width="39.1" height="38.6" fill="#171717"/><rect x="83.7" y="1.1" width="39.1" height="38.6" fill="#171717"/><rect x="125.0" y="1.1" width="39.1" height="38.6" fill="#171717"/><rect x="83.7" y="41.9" width="39.1" height="38.6" fill="#171717"/><rect x="125.0" y="41.9" width="39.1" height="38.6" fill="#171717"/><rect x="166.3" y="1.1" width="39.1" height="38.6" fill="#171717"/><rect x="207.6" y="1.1" width="39.1" height="38.6" fill="#171717"/><rect x="166.3" y="41.9" width="39.1" height="38.6" fill="#171717"/><rect x="207.6" y="41.9" width="39.1" height="38.6" fill="#171717"/><rect x="210.6" y="-48" width="39.1" height="36" fill="#191919"/><rect x="251.9" y="-48" width="39.1" height="36" fill="#191919"/><rect x="166" y="-10.8" width="90" height="10" fill="#131313" stroke="#2a2a2a" stroke-width="0.9" stroke-dasharray="2 0.8"/><rect x="248" y="-0.8" width="8" height="40.6" fill="#131313" stroke="#2a2a2a" stroke-width="0.9" stroke-dasharray="2 0.8"/><rect x="248" y="39.8" width="8" height="40.6" fill="#131313" stroke="#2a2a2a" stroke-width="0.9" stroke-dasharray="2 0.8"/><rect x="213" y="72.4" width="35" height="8" fill="#131313" stroke="#2a2a2a" stroke-width="0.9" stroke-dasharray="2 0.8"/><rect x="166" y="-0.8" width="82" height="81.2" fill="none" stroke="#222" stroke-width="0.8"/><rect x="210" y="-10.2" width="42" height="8.6" fill="url(#bar)" filter="url(#bl)"/></g><path d="M926.6 340.6 L977.4 317.2 L979.6 323.6 L929.4 347.4 Z" fill="#101010" stroke="#2c2c2c" stroke-width="0.9" stroke-dasharray="2 0.8"/><g filter="url(#bl)"><path d="M954 331.8 L976.8 320.4 L978.4 324.4 L957.4 335.8 Z" fill="#dedede"/><path d="M947.8 334.6 L969.2 324 L956.5 344.2 Z" fill="#f4f4f4"/><path d="M976.4 326.2 L995.2 330 L982 344.2 Z" fill="#ffffff"/></g><circle cx="969.6" cy="360.2" r="20.4" fill="#000"/><path d="M949.6 357.4 L989.6 357.4 Q990.4 366 986 372.6 L986 381.6 L952.6 381.6 L952.6 372.6 Q948.8 366 949.6 357.4 Z" fill="#0d0d0d"/><path d="M949.6 357.8 L989.6 357.8" stroke="#1b1b1b" stroke-width="1.6"/><path d="M951 368.4 L988 368.4 M952.6 373.6 L986 373.6" stroke="#050505" stroke-width="1.4"/><rect x="952.6" y="376.4" width="33.4" height="5.2" fill="#080808"/><g filter="url(#bl2)"><ellipse cx="977" cy="394" rx="5.2" ry="5.6" fill="#e88a10"/><ellipse cx="969.4" cy="399" rx="5.4" ry="3.4" fill="#f6c820"/></g><g filter="url(#bl)"><path d="M965 383 Q969.6 380.6 974.2 383 L975 396 Q970 402 964.8 397 Z" fill="#fffbe6"/></g><path d="M968.6 281.8 L968.6 296.4 L972 293.3 L974.5 299 L976.6 298.1 L974.2 292.6 L978.8 292.4 Z" fill="#fff" stroke="#151515" stroke-width="0.9"/></svg>
<div class="a" style="left:0;top:0;width:1873px;height:916px;will-change:transform">
<div class="t" style="left:269.0px;top:58.8px;font-size:12px;font-weight:400;color:#b9b9b9;letter-spacing:0.19px;">Center</div>
<div class="t" style="left:336.4px;top:58.8px;font-size:12px;font-weight:400;color:#b9b9b9;letter-spacing:0.48px;">Local</div>
<div class="t" style="left:1662.3px;top:59.1px;font-size:12.3px;font-weight:400;color:#c8c8c8;letter-spacing:0.54px;">Account</div>
<div class="t" style="left:1751.8px;top:59.1px;font-size:12.3px;font-weight:400;color:#c8c8c8;letter-spacing:0.34px;">Layers</div>
<div class="t" style="left:1841.2px;top:59.1px;font-size:12.3px;font-weight:400;color:#c8c8c8;letter-spacing:0.00px;letter-spacing:0.5px;">Layout</div>
<div class="t" style="left:24.8px;top:84.7px;font-size:12.2px;font-weight:400;color:#bdbdbd;letter-spacing:0.38px;">Hierarchy</div>
<div class="t" style="left:297.0px;top:103.3px;font-size:11.5px;font-weight:400;color:#6a6a6a;letter-spacing:-0.14px;">All</div>
<div class="t" style="left:67.6px;top:122.1px;font-size:12px;font-weight:400;color:#c8c8c8;letter-spacing:0.63px;-webkit-text-stroke:0.4px #c8c8c8;">SampleScene</div>
<div class="t" style="left:80.9px;top:138.7px;font-size:12.1px;font-weight:400;color:#b9b9b9;letter-spacing:0.27px;">ResourceIniter</div>
<div class="t" style="left:80.9px;top:154.9px;font-size:12.1px;font-weight:400;color:#b9b9b9;letter-spacing:0.49px;">Main</div>
<div class="t" style="left:80.9px;top:171.1px;font-size:12.1px;font-weight:400;color:#b9b9b9;letter-spacing:0.32px;">Global Debugging Light</div>
<div class="t" style="left:80.9px;top:187.4px;font-size:12.1px;font-weight:400;color:#b9b9b9;letter-spacing:0.38px;">Player</div>
<div class="t" style="left:80.9px;top:203.7px;font-size:12.1px;font-weight:400;color:#b9b9b9;letter-spacing:0.38px;">first</div>
<div class="t" style="left:66.4px;top:219.9px;font-size:12.1px;font-weight:400;color:#b9b9b9;letter-spacing:0.40px;">DontDestroyOnLoad</div>
<div class="t" style="left:620.4px;top:84.7px;font-size:12.2px;font-weight:400;color:#b4b4b4;letter-spacing:0.38px;">TileShader</div>
<div class="t" style="left:724.9px;top:84.7px;font-size:12.2px;font-weight:400;color:#b4b4b4;letter-spacing:0.48px;">Scene</div>
<div class="t" style="left:804.6px;top:84.7px;font-size:12.2px;font-weight:400;color:#c4c4c4;letter-spacing:-0.07px;">Game</div>
<div class="t" style="left:599.7px;top:104.2px;font-size:12.2px;font-weight:400;color:#b9b9b9;letter-spacing:0.12px;">Display 1</div>
<div class="t" style="left:681.2px;top:104.2px;font-size:12.2px;font-weight:400;color:#b9b9b9;letter-spacing:0.22px;">Full HD (1920x1080)</div>
<div class="t" style="left:847.2px;top:104.2px;font-size:12.2px;font-weight:400;color:#b9b9b9;letter-spacing:0.38px;">Scale</div>
<div class="t" style="left:1026.3px;top:104.2px;font-size:12.2px;font-weight:400;color:#b9b9b9;letter-spacing:0.69px;">0.38x</div>
<div class="t" style="left:1072.4px;top:104.2px;font-size:12.2px;font-weight:400;color:#b9b9b9;letter-spacing:0.25px;">Maximize On Play</div>
<div class="t" style="left:1238.2px;top:104.2px;font-size:12.2px;font-weight:400;color:#b9b9b9;letter-spacing:0.30px;">Stats</div>
<div class="t" style="left:1277.7px;top:104.2px;font-size:12.2px;font-weight:400;color:#b9b9b9;letter-spacing:0.24px;">Gizmos</div>
<div class="t" style="left:1369.8px;top:84.7px;font-size:12.2px;font-weight:400;color:#bdbdbd;letter-spacing:0.38px;">Inspector</div>
<div class="t" style="left:24.5px;top:606.8px;font-size:12.2px;font-weight:400;color:#bdbdbd;letter-spacing:0.51px;">Project</div>
<div class="t" style="left:108.3px;top:606.8px;font-size:12.2px;font-weight:400;color:#b4b4b4;letter-spacing:0.26px;">Console</div>
<div class="t" style="left:1331.0px;top:625.8px;font-size:12px;font-weight:400;color:#b9b9b9;letter-spacing:0.00px;">8</div>
<div class="t" style="left:217.3px;top:646.6px;font-size:12px;font-weight:400;color:#bdbdbd;letter-spacing:1.18px;-webkit-text-stroke:0.4px #bdbdbd;">Assets</div>
<div class="t" style="left:37.0px;top:644.7px;font-size:12px;font-weight:400;color:#c8c8c8;letter-spacing:0.71px;-webkit-text-stroke:0.4px #c8c8c8;">Favorites</div>
<div class="t" style="left:50.3px;top:660.9px;font-size:12.1px;font-weight:400;color:#b9b9b9;letter-spacing:0.34px;">All Materials</div>
<div class="t" style="left:50.3px;top:677.1px;font-size:12.1px;font-weight:400;color:#b9b9b9;letter-spacing:0.34px;">All Models</div>
<div class="t" style="left:50.3px;top:693.3px;font-size:12.1px;font-weight:400;color:#b9b9b9;letter-spacing:0.21px;">All Prefabs</div>
<div class="t" style="left:37.0px;top:725.7px;font-size:12px;font-weight:400;color:#c8c8c8;letter-spacing:1.18px;-webkit-text-stroke:0.4px #c8c8c8;">Assets</div>
<div class="t" style="left:50.3px;top:741.9px;font-size:12.1px;font-weight:400;color:#b9b9b9;letter-spacing:0.37px;">Pictures</div>
<div class="t" style="left:50.3px;top:758.1px;font-size:12.1px;font-weight:400;color:#b9b9b9;letter-spacing:0.48px;">Player</div>
<div class="t" style="left:50.3px;top:774.3px;font-size:12.1px;font-weight:400;color:#b9b9b9;letter-spacing:0.36px;">RescourceIniter</div>
<div class="t" style="left:50.3px;top:790.5px;font-size:12.1px;font-weight:400;color:#b9b9b9;letter-spacing:0.47px;">Scenes</div>
<div class="t" style="left:50.3px;top:806.7px;font-size:12.1px;font-weight:400;color:#b9b9b9;letter-spacing:0.46px;">Scripts</div>
<div class="t" style="left:50.3px;top:822.9px;font-size:12.1px;font-weight:400;color:#b9b9b9;letter-spacing:0.42px;">SpaceEntity</div>
<div class="t" style="left:50.3px;top:839.1px;font-size:12.1px;font-weight:400;color:#b9b9b9;letter-spacing:0.42px;">SpaceEntityComp</div>
<div class="t" style="left:50.3px;top:855.3px;font-size:12.1px;font-weight:400;color:#b9b9b9;letter-spacing:0.55px;">Tile</div>
<div class="t" style="left:50.3px;top:871.5px;font-size:12.1px;font-weight:400;color:#b9b9b9;letter-spacing:-0.42px;">URP</div>
<div class="t" style="left:37.0px;top:887.7px;font-size:12px;font-weight:400;color:#c8c8c8;letter-spacing:0.76px;-webkit-text-stroke:0.4px #c8c8c8;">Packages</div>
<div class="t" style="left:239.3px;top:741.5px;font-size:10.2px;font-weight:400;color:#b0b0b0;letter-spacing:0.46px;">Pictures</div>
<div class="t" style="left:323.0px;top:741.5px;font-size:10.2px;font-weight:400;color:#b0b0b0;letter-spacing:0.22px;">Player</div>
<div class="t" style="left:383.9px;top:741.5px;font-size:10.2px;font-weight:400;color:#b0b0b0;letter-spacing:0.24px;">Rescource...</div>
<div class="t" style="left:473.6px;top:741.5px;font-size:10.2px;font-weight:400;color:#b0b0b0;letter-spacing:0.24px;">Scenes</div>
<div class="t" style="left:552.0px;top:741.5px;font-size:10.2px;font-weight:400;color:#b0b0b0;letter-spacing:0.36px;">Scripts</div>
<div class="t" style="left:618.0px;top:741.5px;font-size:10.2px;font-weight:400;color:#b0b0b0;letter-spacing:0.40px;">SpaceEntity</div>
<div class="t" style="left:694.3px;top:741.5px;font-size:10.2px;font-weight:400;color:#b0b0b0;letter-spacing:0.29px;">SpaceEntit...</div>
<div class="t" style="left:794.3px;top:741.5px;font-size:10.2px;font-weight:400;color:#b0b0b0;letter-spacing:-0.08px;">Tile</div>
<div class="t" style="left:868.3px;top:741.5px;font-size:10.2px;font-weight:400;color:#b0b0b0;letter-spacing:-0.76px;">URP</div>
<div class="t" style="left:932.4px;top:741.5px;font-size:10.2px;font-weight:400;color:#b0b0b0;letter-spacing:0.17px;">MainClass</div>
<div class="t" style="left:1008.8px;top:741.5px;font-size:10.2px;font-weight:400;color:#b0b0b0;letter-spacing:0.18px;">SpaceShip</div>
</div>
</body></html>
